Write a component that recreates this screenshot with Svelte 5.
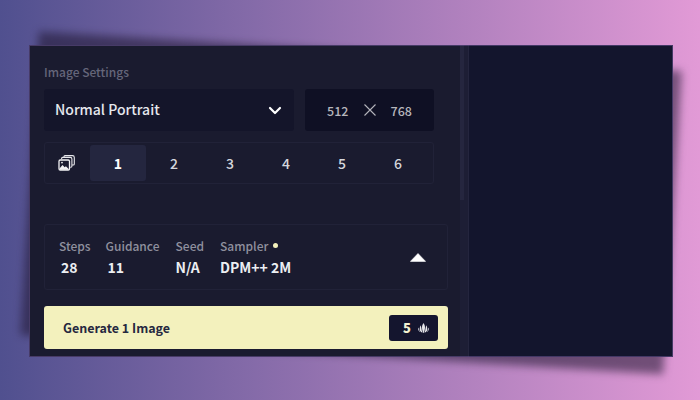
<script>
  let qty = $state(1);
  const options = [1, 2, 3, 4, 5, 6];
  const stats = [
    { label: 'Steps', value: '28' },
    { label: 'Guidance', value: '11' },
    { label: 'Seed', value: 'N/A' },
    { label: 'Sampler', value: 'DPM++ 2M', dot: true }
  ];
</script>

<div class="page">
  <div class="window">
    <div class="left">
      <div class="settings">
        <div class="title">Image Settings</div>
        <div class="row">
          <div class="select">
            <span>Normal Portrait</span>
            <svg width="14" height="9" viewBox="0 0 14 9" fill="none">
              <path d="M2 2l5 5 5-5" stroke="#fff" stroke-width="2.2" stroke-linecap="round" stroke-linejoin="round" />
            </svg>
          </div>
          <div class="size">
            <span>512</span>
            <svg width="12" height="12" viewBox="0 0 12 12" fill="none">
              <path d="M.5.5l11 11M11.500.5l-11 11" stroke="#b4b4bc" stroke-width="1.1" />
            </svg>
            <span>768</span>
          </div>
        </div>
        <div class="tabs">
          <div class="tabs-icon">
            <svg width="17" height="16" viewBox="0 0 17 16" fill="none">
              <path d="M6 3V1.6C6 1 6.5.6 7 .6h7.5c1 0 1.8.8 1.8 1.8V9c0 .6-.4 1-1 1H14" stroke="#e8e8ec" stroke-width="1.1" />
              <path d="M3.6 4.2V3.4c0-.6.5-1 1-1h7.600c1 0 1.700.8 1.700 1.700v7.200c0 .5-.4.9-.9.9h-.8" stroke="#e8e8ec" stroke-width="1.1" />
              <rect x="1" y="5" width="10.5" height="10" rx="1.2" stroke="#f2f2f4" stroke-width="1.3" />
              <path d="M1.500 13.500l3-3.500 2.200 2.200 1.200-1 2.600 2.600v1H1.500z" fill="#f2f2f4" />
              <circle cx="4" cy="7.600" r=".9" fill="#f2f2f4" />
            </svg>
          </div>
          {#each options as n}
            <button class="tab" class:active={qty === n} onclick={() => (qty = n)}>{n}</button>
          {/each}
        </div>
      </div>

      <div class="stats">
        {#each stats as s}
          <div class="stat">
            <div class="label">{s.label}{#if s.dot}<i class="dot"></i>{/if}</div>
            <div class="value">{s.value}</div>
          </div>
        {/each}
        <svg class="caret" width="16" height="9" viewBox="0 0 16 9">
          <path d="M8 .5L15.600 8.400H.4z" fill="#fff" stroke="#fff" stroke-width=".6" stroke-linejoin="round" />
        </svg>
      </div>

      <button class="generate">
        <span>Generate {qty} Image{qty > 1 ? 's' : ''}</span>
        <span class="cost">
          <b>5</b>
          <svg width="11" height="10" viewBox="0 0 11 10" fill="#e6e6ea">
            <path d="M5.500 0C6.600 1.600 7 3 7 4.600 7 6.400 6.400 8.200 5.900 9.800H5.100C4.600 8.200 4 6.400 4 4.600 4 3 4.400 1.600 5.500 0z" />
            <path d="M2.500 2.300C3 3.300 3.300 4.200 3.400 5.300 3.500 6.800 4 8.300 4.500 9.700 3 9.400 1.700 8.200 1.700 6.300 1.700 4.800 2 3.500 2.500 2.300z" />
            <path d="M8.500 2.300C8 3.300 7.700 4.200 7.600 5.300 7.500 6.800 7 8.300 6.500 9.700 8 9.400 9.300 8.200 9.300 6.300 9.300 4.800 9 3.500 8.500 2.300z" />
            <path d="M0 4.500C.4 5.200.8 5.500 1 6 1.100 7.200 1.500 8.200 2.200 9 .8 8.500 0 6.800 0 4.500z" />
            <path d="M11 4.500C10.600 5.200 10.200 5.500 10 6 9.900 7.200 9.500 8.200 8.800 9 10.200 8.500 11 6.800 11 4.500z" />
          </svg>
        </span>
      </button>
    </div>
    <div class="scroll"><div class="thumb"></div></div>
    <div class="right"></div>
  </div>
</div>

<style>
  :global(body) {
    margin: 0;
  }

  .page {
    box-sizing: border-box;
    width: 700px;
    height: 400px;
    padding: 45px 27px 43px 29px;
    background: linear-gradient(90deg, #50508f 0%, #e29ad6 100%);
    font-family: "Noto Sans CJK JP", "Noto Sans", sans-serif;
    isolation: isolate;
    overflow: hidden;
  }

  .window {
    position: relative;
    display: flex;
    height: 100%;
    background: #1a1b2f;
    outline: 1px solid rgba(110, 85, 150, 0.55);
    outline-offset: -1px;
  }

  /* the shadow is a tilted copy of the window, not a plain box-shadow */
  .window::before {
    content: '';
    position: absolute;
    top: 6px;
    bottom: 2px;
    left: 0;
    right: 0;
    z-index: -1;
    background: rgba(30, 20, 45, 0.55);
    transform: rotate(3.5deg);
    filter: blur(4px);
  }

  .left {
    display: flex;
    flex-direction: column;
    width: 431px;
    box-sizing: border-box;
    padding: 0 12px 8px 15px;
    background: #1a1b2f;
  }

  .settings {
    width: 390px;
    height: 180px;
    padding-top: 18px;
    box-sizing: border-box;
  }

  .title {
    height: 26px;
    font-size: 12px;
    line-height: 18px;
    color: #65667a;
    font-weight: 500;
  }

  .row {
    display: flex;
    gap: 11px;
    height: 42px;
  }

  .select {
    flex: 1;
    display: flex;
    align-items: center;
    justify-content: space-between;
    padding: 0 12px 0 11px;
    background: #14152a;
    border-radius: 3px;
    font-size: 14px;
    color: #e6e8ee;
    font-weight: 500;
  }

  .select span {
    padding-bottom: 2px;
  }

  .size {
    width: 129px;
    display: flex;
    align-items: center;
    justify-content: center;
    gap: 15px;
    background: #0f1024;
    border-radius: 3px;
    font-size: 12.5px;
    color: #b6b6bc;
    font-weight: 500;
  }

  .tabs {
    display: flex;
    align-items: center;
    height: 42px;
    margin-top: 11px;
    padding: 0 3px 0 0;
    border: 1px solid #212238;
    border-radius: 3px;
    box-sizing: border-box;
  }

  .tabs-icon {
    display: flex;
    justify-content: center;
    width: 43px;
    padding-right: 2px;
    flex: none;
  }

  .tab {
    width: 56px;
    height: 36px;
    flex: none;
    border: 0;
    padding: 0;
    background: none;
    border-radius: 3px;
    font: 500 14px "Noto Sans CJK JP", sans-serif;
    color: #d4d6dc;
  }

  .tab.active {
    background: #24263f;
    color: #fff;
    font-weight: 700;
  }

  .stats {
    display: flex;
    align-items: center;
    gap: 15px;
    height: 66px;
    box-sizing: border-box;
    width: 404px;
    padding: 0 21px 2px 14px;
    border: 1px solid #212238;
    border-radius: 3px;
  }

  .stat:nth-child(n + 3) {
    margin-left: 1px;
  }

  .label {
    display: flex;
    align-items: center;
    gap: 5px;
    margin-bottom: 2px;
    font-size: 12px;
    line-height: 19px;
    color: #8f909e;
    font-weight: 500;
  }

  .dot {
    width: 5px;
    height: 5px;
    border-radius: 50%;
    background: #f4f1bc;
  }

  .value {
    font-size: 14px;
    line-height: 20px;
    color: #eceef2;
    font-weight: 700;
    padding-left: 2px;
  }

  .stat:nth-child(n + 3) .value {
    padding-left: 0;
  }

  .caret {
    margin-left: auto;
    margin-top: 2px;
  }

  .generate {
    display: flex;
    align-items: center;
    justify-content: space-between;
    width: 404px;
    height: 43px;
    flex: none;
    margin-top: 16px;
    padding: 0 10px 0 19px;
    border: 0;
    border-radius: 3px;
    background: #f3f1bd;
    color: #25283f;
    font: 700 12.5px "Noto Sans CJK JP", sans-serif;
  }

  .cost {
    display: flex;
    align-items: center;
    gap: 7px;
    height: 26px;
    padding: 0 9px 0 14px;
    background: #14152e;
    border-radius: 3px;
    color: #f3f1d0;
    font-size: 13px;
  }

  .scroll {
    width: 9px;
    flex: none;
    background: #1d1e35;
    border-right: 1px solid #24253e;
    box-sizing: border-box;
  }

  .thumb {
    width: 4px;
    height: 155px;
    background: #25263f;
  }

  .right {
    flex: 1;
    background: #13152d;
  }
</style>
